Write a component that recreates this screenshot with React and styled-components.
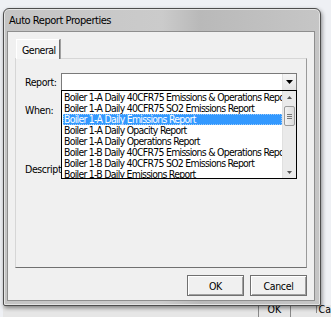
import React from 'react';
import styled, { createGlobalStyle } from 'styled-components';

const GlobalStyle = createGlobalStyle`
  html, body {
    margin: 0;
    padding: 0;
    background: #eef0f4;
    font-family: "DejaVu Sans Condensed", "DejaVu Sans", "Liberation Sans", sans-serif;
    font-stretch: condensed;
  }
`;

const reports = [
  'Boiler 1-A Daily 40CFR75 Emissions & Operations Report',
  'Boiler 1-A Daily 40CFR75 SO2 Emissions Report',
  'Boiler 1-A Daily Emissions Report',
  'Boiler 1-A Daily Opacity Report',
  'Boiler 1-A Daily Operations Report',
  'Boiler 1-B Daily 40CFR75 Emissions & Operations Report',
  'Boiler 1-B Daily 40CFR75 SO2 Emissions Report',
  'Boiler 1-B Daily Emissions Report',
];

const App = () => {
  return (
    <>
      <GlobalStyle />
      <Page>
        <Window>
          <TitleBar>Auto Report Properties</TitleBar>
          <Client>
            <TabStrip>
              <Tab>General</Tab>
            </TabStrip>
            <TabPanel>
              <FormRow>
                <Label>Report:</Label>
                <ComboWrap>
                  <Combo>
                    <ComboText />
                    <DropButton>
                      <svg width="7" height="4" viewBox="0 0 7 4">
                        <path d="M0 0h7L3.5 4z" fill="#000" />
                      </svg>
                    </DropButton>
                  </Combo>
                  <DropList>
                    <Items>
                      {reports.map((r, i) => (
                        <Item key={i} selected={i === 2}>{r}</Item>
                      ))}
                    </Items>
                    <ScrollBar>
                      <Arrow>
                        <svg width="5" height="3" viewBox="0 0 5 3">
                          <path d="M0 3h5L2.5 0z" fill="#555" />
                        </svg>
                      </Arrow>
                      <Track>
                        <Thumb>
                          <Grip />
                          <Grip />
                          <Grip />
                        </Thumb>
                      </Track>
                      <Arrow>
                        <svg width="5" height="3" viewBox="0 0 5 3">
                          <path d="M0 0h5L2.5 3z" fill="#555" />
                        </svg>
                      </Arrow>
                    </ScrollBar>
                  </DropList>
                </ComboWrap>
              </FormRow>
              <FormRow top={13}>
                <Label>When:</Label>
              </FormRow>
              <FormRow top={47}>
                <Label>Description:</Label>
              </FormRow>
            </TabPanel>
            <ButtonRow>
              <Button>OK</Button>
              <Button>Cancel</Button>
            </ButtonRow>
          </Client>
        </Window>
        <Behind>
          <BehindButton>OK</BehindButton>
          <BehindText>Ca</BehindText>
        </Behind>
      </Page>
    </>
  );
};

export default App;

const Page = styled.div`
  width: 331px;
  height: 317px;
  overflow: hidden;
  padding: 8px 0 0 3px;
  box-sizing: border-box;
  display: flex;
  flex-direction: column;
`;

const Window = styled.div`
  width: 318px;
  height: 299px;
  box-sizing: border-box;
  border: 1px solid #4d4d4d;
  border-radius: 6px 6px 2px 2px;
  background: linear-gradient(90deg, #c4c4c4 0%, #cbcbcb 50%, #b9b9b9 62%, #c6c6c6 100%);
  box-shadow: 1px 2px 4px rgba(0, 0, 0, 0.45), inset 0 0 0 1px #e4e4e4;
  display: flex;
  flex-direction: column;
  padding: 0 5px 4px 3px;
  position: relative;
  z-index: 1;
`;

const TitleBar = styled.div`
  height: 22px;
  line-height: 23px;
  padding-left: 2px;
  font-size: 11px;
  color: #000;
  letter-spacing: -0.45px;
`;

const Client = styled.div`
  flex: 1;
  background: #f0f0f0;
  border: 1px solid #8e8e8e;
  display: flex;
  flex-direction: column;
  padding: 7px 7px 0 7px;
`;

const TabStrip = styled.div`
  display: flex;
  padding-left: 1px;
  height: 19px;
`;

const Tab = styled.div`
  height: 20px;
  padding: 0 3px 0 5px;
  box-sizing: border-box;
  line-height: 21px;
  font-size: 10.5px;
  letter-spacing: -0.5px;
  background: #f5f5f5;
  border: 1px solid #ffffff;
  border-right: 1px solid #707070;
  border-bottom: none;
  box-shadow: 1px 0 0 #a0a0a0;
  position: relative;
  z-index: 2;
`;

const TabPanel = styled.div`
  height: 210px;
  box-sizing: border-box;
  border: 1px solid #d6d6d6;
  border-right: 1px solid #9a9a9a;
  border-bottom: 1px solid #707070;
  background: #f0f0f0;
  padding: 14px 9px 0 9px;
  display: flex;
  flex-direction: column;
`;

const FormRow = styled.div`
  display: flex;
  align-items: center;
  margin-top: ${(p) => (p.top ? p.top + 'px' : '0')};
`;

const Label = styled.div`
  width: 36px;
  font-size: 10.5px;
  letter-spacing: -0.4px;
  white-space: nowrap;
  color: #000;
`;

const ComboWrap = styled.div`
  position: relative;
  flex: 1;
`;

const Combo = styled.div`
  height: 18px;
  box-sizing: border-box;
  border: 1px solid #7a7a7a;
  background: #fff;
  display: flex;
`;

const ComboText = styled.div`
  flex: 1;
`;

const DropButton = styled.div`
  width: 13px;
  border-left: 1px solid #e2e2e2;
  background: linear-gradient(#f6f6f6, #e4e4e4);
  display: flex;
  align-items: center;
  justify-content: center;
`;

const DropList = styled.div`
  position: absolute;
  left: 0;
  right: 0;
  top: 17px;
  height: 89px;
  box-sizing: border-box;
  border: 1px solid #000;
  background: #fff;
  display: flex;
  z-index: 5;
`;

const Items = styled.div`
  flex: 1;
  overflow: hidden;
  padding: 1px 0 0 1px;
`;

const Item = styled.div`
  height: 11px;
  line-height: 11px;
  font-size: 10.4px;
  letter-spacing: -0.72px;
  white-space: nowrap;
  overflow: hidden;
  padding-left: 1px;
  color: ${(p) => (p.selected ? '#fff' : '#000')};
  background: ${(p) => (p.selected ? '#3399ff' : 'transparent')};
  outline: ${(p) => (p.selected ? '1px dotted #9cc9f7' : 'none')};
  outline-offset: -1px;
`;

const ScrollBar = styled.div`
  width: 13px;
  background: #eaeaea;
  border-left: 1px solid #e0e0e0;
  display: flex;
  flex-direction: column;
`;

const Arrow = styled.div`
  height: 12px;
  display: flex;
  align-items: center;
  justify-content: center;
`;

const Track = styled.div`
  flex: 1;
  padding-top: 3px;
`;

const Thumb = styled.div`
  height: 20px;
  margin: 0 1px;
  box-sizing: border-box;
  border: 1px solid #9b9b9b;
  border-radius: 2px;
  background: linear-gradient(90deg, #f2f2f2, #dcdcdc);
  display: flex;
  flex-direction: column;
  align-items: center;
  justify-content: center;
  gap: 1px;
`;

const Grip = styled.div`
  width: 5px;
  height: 1px;
  background: #777;
`;

const ButtonRow = styled.div`
  display: flex;
  justify-content: flex-end;
  gap: 6px;
  padding: 7px 0 0 0;
`;

const Button = styled.div`
  width: 57px;
  height: 21px;
  box-sizing: border-box;
  border: 1px solid #707070;
  box-shadow: inset 1px 1px 0 #fff, inset -1px -1px 0 #a0a0a0;
  background: #f0f0f0;
  font-size: 10.5px;
  letter-spacing: -0.3px;
  display: flex;
  align-items: center;
  justify-content: center;
  color: #000;
`;

const Behind = styled.div`
  display: flex;
  align-items: flex-start;
  padding-left: 255px;
  margin-top: -1px;
  background: #e6e6e6;
  height: 12px;
`;

const BehindButton = styled.div`
  width: 34px;
  height: 12px;
  box-sizing: border-box;
  border-left: 1px solid #888;
  border-right: 1px solid #888;
  font-size: 10.5px;
  line-height: 8px;
  text-align: center;
  overflow: hidden;
`;

const BehindText = styled.div`
  margin-left: 25px;
  font-size: 10.5px;
  line-height: 8px;
  border-left: 1px solid #888;
  padding-left: 2px;
`;
